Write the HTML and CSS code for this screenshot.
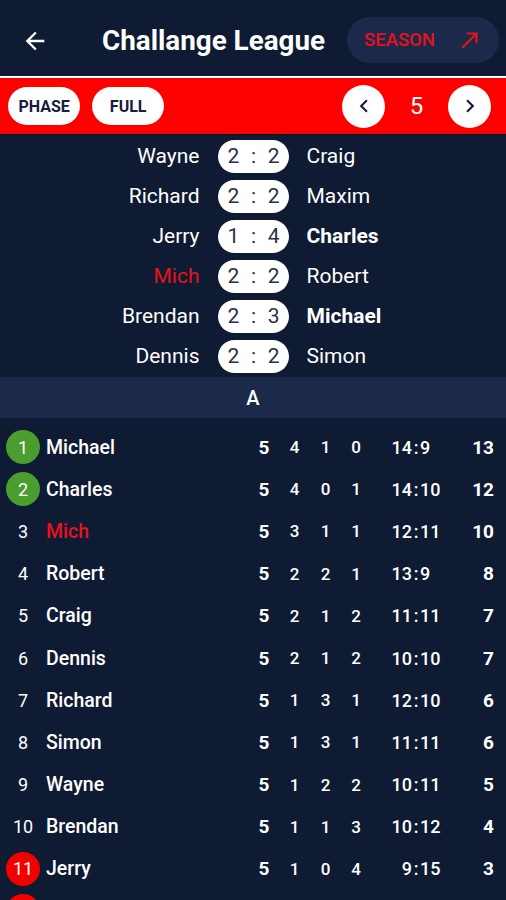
FILE: index.html
```html
<!DOCTYPE html>
<html>
<head>
<meta charset="utf-8">
<link rel="stylesheet" href="styles.css">
</head>
<body>
<div class="app">
  <header class="topbar">
    <button class="back" aria-label="Back">
      <svg viewBox="0 0 24 24" width="28" height="28"><path d="M20 11H7.83l5.59-5.59L12 4l-8 8 8 8 1.41-1.41L7.83 13H20v-2z" fill="#fff"/></svg>
    </button>
    <h1 class="title">Challange League</h1>
    <button class="season">
      <span>SEASON</span>
      <svg viewBox="0 0 24 24" width="26" height="26"><path d="M9 5v2h6.59L4 18.59 5.41 20 17 8.41V15h2V5z" fill="#e8101a"/></svg>
    </button>
  </header>
  <div class="divider"></div>
  <nav class="toolbar">
    <div class="modes">
      <button class="chip">PHASE</button>
      <button class="chip">FULL</button>
    </div>
    <div class="rounds">
      <button class="circle" aria-label="Previous">
        <svg viewBox="0 0 24 24" width="26" height="26"><path d="M15.41 7.41 14 6l-6 6 6 6 1.41-1.41L10.83 12z" fill="#14203d"/></svg>
      </button>
      <span class="round">5</span>
      <button class="circle" aria-label="Next">
        <svg viewBox="0 0 24 24" width="26" height="26"><path d="M10 6 8.59 7.41 13.17 12l-4.58 4.59L10 18l6-6z" fill="#14203d"/></svg>
      </button>
    </div>
  </nav>

  <section class="matches">
    <div class="match"><span class="home">Wayne</span><span class="score"><i>2</i><i>:</i><i>2</i></span><span class="away">Craig</span></div>
    <div class="match"><span class="home">Richard</span><span class="score"><i>2</i><i>:</i><i>2</i></span><span class="away">Maxim</span></div>
    <div class="match"><span class="home">Jerry</span><span class="score"><i>1</i><i>:</i><i>4</i></span><span class="away win">Charles</span></div>
    <div class="match"><span class="home me">Mich</span><span class="score"><i>2</i><i>:</i><i>2</i></span><span class="away">Robert</span></div>
    <div class="match"><span class="home">Brendan</span><span class="score"><i>2</i><i>:</i><i>3</i></span><span class="away win">Michael</span></div>
    <div class="match"><span class="home">Dennis</span><span class="score"><i>2</i><i>:</i><i>2</i></span><span class="away">Simon</span></div>
  </section>

  <div class="group">A</div>

  <section class="table">
    <div class="row"><span class="rank"><b class="badge up">1</b></span><span class="name">Michael</span><span class="p">5</span><span class="n">4</span><span class="n">1</span><span class="n">0</span><span class="gf">14</span><span class="gc">:</span><span class="ga">9</span><span class="pts">13</span></div>
    <div class="row"><span class="rank"><b class="badge up">2</b></span><span class="name">Charles</span><span class="p">5</span><span class="n">4</span><span class="n">0</span><span class="n">1</span><span class="gf">14</span><span class="gc">:</span><span class="ga">10</span><span class="pts">12</span></div>
    <div class="row"><span class="rank"><b class="badge">3</b></span><span class="name me">Mich</span><span class="p">5</span><span class="n">3</span><span class="n">1</span><span class="n">1</span><span class="gf">12</span><span class="gc">:</span><span class="ga">11</span><span class="pts">10</span></div>
    <div class="row"><span class="rank"><b class="badge">4</b></span><span class="name">Robert</span><span class="p">5</span><span class="n">2</span><span class="n">2</span><span class="n">1</span><span class="gf">13</span><span class="gc">:</span><span class="ga">9</span><span class="pts">8</span></div>
    <div class="row"><span class="rank"><b class="badge">5</b></span><span class="name">Craig</span><span class="p">5</span><span class="n">2</span><span class="n">1</span><span class="n">2</span><span class="gf">11</span><span class="gc">:</span><span class="ga">11</span><span class="pts">7</span></div>
    <div class="row"><span class="rank"><b class="badge">6</b></span><span class="name">Dennis</span><span class="p">5</span><span class="n">2</span><span class="n">1</span><span class="n">2</span><span class="gf">10</span><span class="gc">:</span><span class="ga">10</span><span class="pts">7</span></div>
    <div class="row"><span class="rank"><b class="badge">7</b></span><span class="name">Richard</span><span class="p">5</span><span class="n">1</span><span class="n">3</span><span class="n">1</span><span class="gf">12</span><span class="gc">:</span><span class="ga">10</span><span class="pts">6</span></div>
    <div class="row"><span class="rank"><b class="badge">8</b></span><span class="name">Simon</span><span class="p">5</span><span class="n">1</span><span class="n">3</span><span class="n">1</span><span class="gf">11</span><span class="gc">:</span><span class="ga">11</span><span class="pts">6</span></div>
    <div class="row"><span class="rank"><b class="badge">9</b></span><span class="name">Wayne</span><span class="p">5</span><span class="n">1</span><span class="n">2</span><span class="n">2</span><span class="gf">10</span><span class="gc">:</span><span class="ga">11</span><span class="pts">5</span></div>
    <div class="row"><span class="rank"><b class="badge">10</b></span><span class="name">Brendan</span><span class="p">5</span><span class="n">1</span><span class="n">1</span><span class="n">3</span><span class="gf">10</span><span class="gc">:</span><span class="ga">12</span><span class="pts">4</span></div>
    <div class="row"><span class="rank"><b class="badge down">11</b></span><span class="name">Jerry</span><span class="p">5</span><span class="n">1</span><span class="n">0</span><span class="n">4</span><span class="gf">9</span><span class="gc">:</span><span class="ga">15</span><span class="pts">3</span></div>
    <div class="row"><span class="rank"><b class="badge down">12</b></span><span class="name">Maxim</span><span class="p">5</span><span class="n">0</span><span class="n">2</span><span class="n">3</span><span class="gf">8</span><span class="gc">:</span><span class="ga">13</span><span class="pts">2</span></div>
  </section>
</div>
</body>
</html>
```
FILE: styles.css
```css
* { box-sizing: border-box; }
html, body {
  margin: 0;
  padding: 0;
  background: #0f1a33;
  font-family: Roboto, "Noto Sans", Arial, sans-serif;
  color: #fff;
  overflow: hidden;
}
button {
  font-family: inherit;
  border: 0;
  padding: 0;
  cursor: pointer;
}
.app {
  width: 506px;
  height: 900px;
  overflow: hidden;
  background: #0f1a33;
}
.topbar {
  height: 76px;
  display: flex;
  align-items: center;
  padding: 5px 7px 0 20px;
}
.back {
  width: 30px;
  height: 30px;
  background: transparent;
  display: flex;
  align-items: center;
  justify-content: center;
}
.title {
  margin: -1px 0 0 52px;
  font-size: 27.8px;
  font-weight: 700;
  letter-spacing: 0;
  white-space: nowrap;
}
.season {
  margin-left: auto;
  margin-top: -1px;
  width: 152px;
  height: 46px;
  border-radius: 23px;
  background: #1b2a4b;
  color: #e8101a;
  display: flex;
  align-items: center;
  justify-content: space-between;
  padding: 0 16px 0 17px;
  font-size: 18.5px;
  font-weight: 500;
}
.divider {
  height: 2px;
  background: #fff;
}
.toolbar {
  height: 57px;
  background: #fd0000;
  display: flex;
  align-items: center;
  justify-content: space-between;
  padding: 0 15px 0 8px;
  border-bottom: 1px solid #0a1126;
}
.modes {
  display: flex;
  gap: 12px;
}
.chip {
  height: 38px;
  border-radius: 19px;
  background: #fff;
  color: #14203d;
  font-size: 16px;
  font-weight: 700;
  padding: 0 10.5px;
}
.chip + .chip { padding: 0 17.5px; }
.rounds {
  display: flex;
  align-items: center;
  gap: 0;
}
.circle {
  width: 43px;
  height: 43px;
  border-radius: 50%;
  background: #fff;
  display: flex;
  align-items: center;
  justify-content: center;
}
.round {
  width: 63px;
  text-align: center;
  font-size: 24px;
  color: #fff;
}
.matches {
  padding: 1px 0 1px;
}
.match {
  height: 40px;
  display: grid;
  grid-template-columns: 1fr 71px 1fr;
  column-gap: 18px;
  align-items: center;
  font-size: 21px;
}
.home { text-align: right; }
.away { text-align: left; }
.win { font-weight: 700; }
.me { color: #e8131c; }
.score {
  height: 33px;
  border-radius: 17px;
  background: #fff;
  color: #2a3045;
  display: flex;
  align-items: center;
  justify-content: space-between;
  padding: 0 9px 0 10px;
  font-size: 21px;
}
.score i { font-style: normal; }
.group {
  height: 41px;
  background: #1b2a4b;
  display: flex;
  align-items: center;
  justify-content: center;
  font-size: 20px;
  font-weight: 500;
}
.table {
  padding-top: 8px;
}
.row {
  height: 42.2px;
  display: grid;
  grid-template-columns: 40px 1fr 30px 31px 31px 30px 41px 8px 32px 42px;
  align-items: center;
  padding: 0 12px 0 6px;
  font-size: 17px;
}
.rank { display: flex; }
.badge {
  width: 34px;
  height: 34px;
  border-radius: 50%;
  display: flex;
  align-items: center;
  justify-content: center;
  font-weight: 400;
  font-size: 18px;
}
.badge.up { background: #4a9d2e; }
.badge.down { background: #f20000; }
.name {
  font-size: 19.5px;
  font-weight: 500;
  white-space: nowrap;
}
.p { text-align: center; font-weight: 700; font-size: 19px; }
.n { text-align: center; font-weight: 500; }
.gf { text-align: right; font-size: 18px; font-weight: 500; }
.gc { text-align: center; font-size: 18px; font-weight: 500; }
.ga { text-align: left; font-size: 18px; font-weight: 500; }
.pts { text-align: right; font-weight: 700; font-size: 19px; }
```
